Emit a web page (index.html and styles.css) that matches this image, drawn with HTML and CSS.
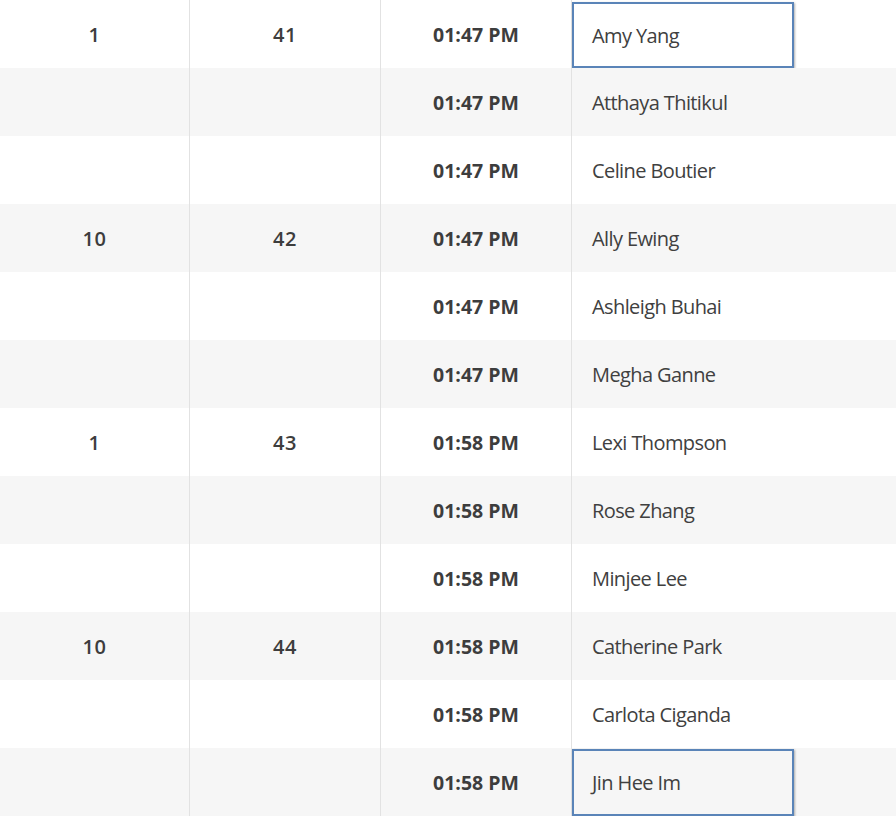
FILE: index.html
```html
<!DOCTYPE html>
<html>
<head>
<meta charset="utf-8">
<link rel="stylesheet" href="styles.css">
</head>
<body>
<div class="table">
  <div class="row"><div class="cell num">1</div><div class="cell num">41</div><div class="cell time">01:47 PM</div><div class="cell name"><div class="sel">Amy Yang</div></div></div>
  <div class="row alt"><div class="cell num"></div><div class="cell num"></div><div class="cell time">01:47 PM</div><div class="cell name"><span>Atthaya Thitikul</span></div></div>
  <div class="row"><div class="cell num"></div><div class="cell num"></div><div class="cell time">01:47 PM</div><div class="cell name"><span>Celine Boutier</span></div></div>
  <div class="row alt"><div class="cell num">10</div><div class="cell num">42</div><div class="cell time">01:47 PM</div><div class="cell name"><span>Ally Ewing</span></div></div>
  <div class="row"><div class="cell num"></div><div class="cell num"></div><div class="cell time">01:47 PM</div><div class="cell name"><span>Ashleigh Buhai</span></div></div>
  <div class="row alt"><div class="cell num"></div><div class="cell num"></div><div class="cell time">01:47 PM</div><div class="cell name"><span>Megha Ganne</span></div></div>
  <div class="row"><div class="cell num">1</div><div class="cell num">43</div><div class="cell time">01:58 PM</div><div class="cell name"><span>Lexi Thompson</span></div></div>
  <div class="row alt"><div class="cell num"></div><div class="cell num"></div><div class="cell time">01:58 PM</div><div class="cell name"><span>Rose Zhang</span></div></div>
  <div class="row"><div class="cell num"></div><div class="cell num"></div><div class="cell time">01:58 PM</div><div class="cell name"><span>Minjee Lee</span></div></div>
  <div class="row alt"><div class="cell num">10</div><div class="cell num">44</div><div class="cell time">01:58 PM</div><div class="cell name"><span>Catherine Park</span></div></div>
  <div class="row"><div class="cell num"></div><div class="cell num"></div><div class="cell time">01:58 PM</div><div class="cell name"><span>Carlota Ciganda</span></div></div>
  <div class="row alt"><div class="cell num"></div><div class="cell num"></div><div class="cell time">01:58 PM</div><div class="cell name"><div class="sel sel-last">Jin Hee Im</div></div></div>
</div>
</body>
</html>
```
FILE: styles.css
```css
html, body {
  margin: 0;
  padding: 0;
  background: #ffffff;
}
body {
  font-family: "Open Sans", "Noto Sans", sans-serif;
  color: #3a3a3a;
  overflow: hidden;
}
.table {
  display: flex;
  flex-direction: column;
}
.row {
  display: grid;
  grid-template-columns: 190px 191px 191px 1fr;
  height: 68px;
  background: #ffffff;
}
.row.alt {
  background: #f6f6f6;
}
.cell {
  display: flex;
  align-items: center;
  box-sizing: border-box;
  padding-top: 1px;
}
.num, .time {
  justify-content: center;
  border-right: 1px solid #e2e2e2;
  font-weight: 600;
  font-size: 20px;
  letter-spacing: 0.6px;
  color: #3d3d3d;
}
.time {
  font-weight: 700;
  font-size: 19.5px;
  letter-spacing: 0;
}
.name {
  font-size: 20px;
  font-weight: 400;
  color: #404040;
  letter-spacing: -0.6px;
  padding-top: 0;
}
.name span {
  padding-left: 20px;
  padding-top: 1px;
}
.sel {
  box-sizing: border-box;
  width: 222px;
  height: 66px;
  margin-top: 2px;
  display: flex;
  align-items: center;
  padding-left: 18px;
  padding-top: 0;
  border: 2px solid #5a84b8;
  box-shadow: 1px 1px 2px rgba(0, 0, 0, 0.3);
}
.sel-last {
  margin-top: 0;
  height: 67px;
}
```
